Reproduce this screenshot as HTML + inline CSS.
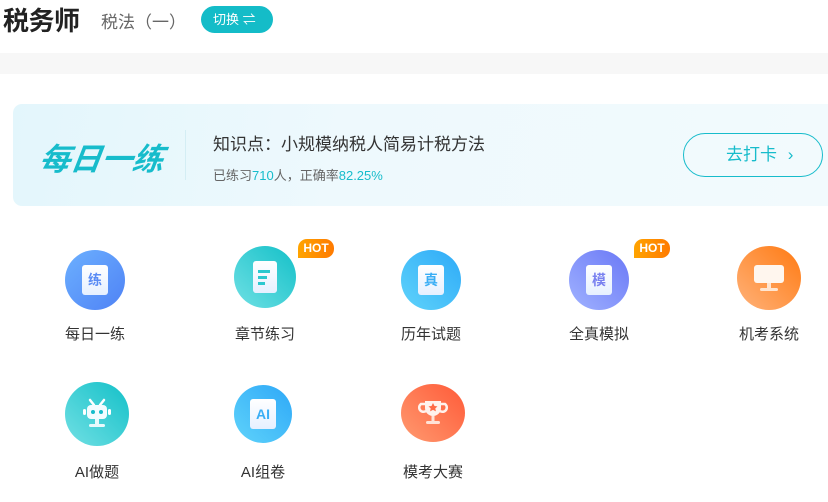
<!DOCTYPE html>
<html><head><meta charset="utf-8"><style>
*{margin:0;padding:0;box-sizing:border-box}
body{width:828px;height:502px;background:#fff;font-family:"Liberation Sans","Noto Sans CJK SC",sans-serif;position:relative;overflow:hidden;color:#333}
.abs{position:absolute}
.title{left:3px;top:1px;font-size:26px;font-weight:bold;color:#222;letter-spacing:-0.5px}
.sub{left:101px;top:8px;font-size:17px;color:#666}
.sw{left:201px;top:6px;width:72px;height:27px;border-radius:14px;background:#14bcc8;color:#fff;font-size:13px;line-height:27px;padding-left:12px}
.band{left:0;top:53px;width:828px;height:21px;background:#f7f7f7}
.card{left:13px;top:104px;width:830px;height:102px;border-radius:9px;background:linear-gradient(100deg,#e3f6fc 0%,#eef9fd 40%,#f2fafd 100%)}
.mr{left:40px;top:134px;font-size:31px;font-weight:bold;font-style:italic;color:#17bccb;transform:skewX(-8deg)}
.div{left:185px;top:130px;width:1px;height:50px;background:#d4eef4}
.kt{left:213px;top:130px;font-size:17px;color:#333}
.ks{left:213px;top:165px;font-size:13px;color:#666}
.ks b{font-weight:normal;color:#17bccb}
.go{left:683px;top:133px;width:140px;height:44px;border:1.5px solid #17bccb;border-radius:22px;color:#17bccb;font-size:17px;line-height:41px;padding-left:42px;word-spacing:6px}
.ic{width:60px;height:60px;border-radius:50%;display:flex;align-items:center;justify-content:center}
.lb{font-size:15px;color:#333;width:120px;text-align:center}
.hot{width:36px;height:19px;border-radius:9px 9px 9px 0;background:linear-gradient(90deg,#ffa400,#ff7a00);color:#fff;font-size:12px;font-weight:bold;text-align:center;line-height:19px}
.doc{width:26px;height:30px;background:linear-gradient(#fff,#e6f0ff);border-radius:3px;display:flex;align-items:center;justify-content:center;font-size:14px;font-weight:bold}
</style></head><body>
<div class="abs title">税务师</div>
<div class="abs sub">税法（一）</div>
<div class="abs sw">切换 ⇌</div>
<div class="abs band"></div>
<div class="abs card"></div>
<div class="abs mr">每日一练</div>
<div class="abs div"></div>
<div class="abs kt">知识点：小规模纳税人简易计税方法</div>
<div class="abs ks">已练习<b>710</b>人，正确率<b>82.25%</b></div>
<div class="abs go">去打卡 ›</div>

<div class="abs ic" style="left:65px;top:250px;background:linear-gradient(135deg,#6cb0ff,#4f82f5)"><div class="doc" style="color:#5a8cf5">练</div></div>
<div class="abs lb" style="left:35px;top:323px">每日一练</div>

<div class="abs ic" style="left:234px;top:246px;width:62px;height:62px;background:linear-gradient(45deg,#6fe0e4,#14c0c8)"><div class="doc" style="width:24px;height:32px;flex-direction:column;align-items:flex-start;padding-left:5px;gap:3px"><i style="display:block;width:12px;height:3px;background:#2cc8cf"></i><i style="display:block;width:9px;height:3px;background:#2cc8cf"></i><i style="display:block;width:7px;height:3px;background:#2cc8cf"></i></div></div>
<div class="abs hot" style="left:298px;top:239px">HOT</div>
<div class="abs lb" style="left:205px;top:323px">章节练习</div>

<div class="abs ic" style="left:401px;top:250px;background:linear-gradient(45deg,#5fd3fa,#2eaaf8)"><div class="doc" style="color:#3aaef5">真</div></div>
<div class="abs lb" style="left:371px;top:323px">历年试题</div>

<div class="abs ic" style="left:569px;top:250px;background:linear-gradient(45deg,#a0b2ff,#6a78f6)"><div class="doc" style="color:#7a82f0">模</div></div>
<div class="abs hot" style="left:634px;top:239px">HOT</div>
<div class="abs lb" style="left:539px;top:323px">全真模拟</div>

<div class="abs ic" style="left:737px;top:246px;width:64px;height:64px;background:linear-gradient(45deg,#ffb27a,#ff7a12)"><svg width="34" height="30" viewBox="0 0 34 30"><rect x="2" y="2" width="30" height="18" rx="3" fill="#fff6ee"/><rect x="15" y="20" width="4" height="5" fill="#ffe5d0"/><rect x="8" y="25" width="18" height="3" rx="1.5" fill="#ffe5d0"/></svg></div>
<div class="abs lb" style="left:709px;top:323px">机考系统</div>

<div class="abs ic" style="left:65px;top:382px;width:64px;height:64px;background:linear-gradient(45deg,#72e0e4,#13c0c8)"><svg width="34" height="34" viewBox="0 0 34 34"><path d="M10 3l4 5M24 3l-4 5" stroke="#fff" stroke-width="2.5" stroke-linecap="round"/><rect x="7" y="8" width="20" height="14" rx="4" fill="#f2fcff"/><rect x="3" y="12" width="3" height="6" rx="1.5" fill="#fff"/><rect x="28" y="12" width="3" height="6" rx="1.5" fill="#fff"/><circle cx="13" cy="15" r="2" fill="#17bccb"/><circle cx="21" cy="15" r="2" fill="#17bccb"/><rect x="15" y="22" width="4" height="5" fill="#e8fafc"/><rect x="9" y="27" width="16" height="3" rx="1.5" fill="#e8fafc"/></svg></div>
<div class="abs lb" style="left:37px;top:461px">AI做题</div>

<div class="abs ic" style="left:234px;top:385px;width:58px;height:58px;background:linear-gradient(45deg,#5fd3fa,#2ea8f8)"><div class="doc" style="color:#3aaef5">AI</div></div>
<div class="abs lb" style="left:203px;top:461px">AI组卷</div>

<div class="abs ic" style="left:401px;top:384px;width:64px;height:58px;background:linear-gradient(45deg,#ff9a70,#ff5a38)"><svg width="34" height="30" viewBox="0 0 34 30"><path d="M9 3h16v7a8 8 0 0 1-16 0z" fill="#fff2ec"/><path d="M9 6H5a4 4 0 0 0 5 7M25 6h4a4 4 0 0 1-5 7" stroke="#fff2ec" stroke-width="2.5" fill="none"/><path d="M17 5l1.5 3 3 .4-2.2 2 .6 3-2.9-1.5-2.9 1.5.6-3-2.2-2 3-.4z" fill="#ff6a45"/><rect x="15.5" y="18" width="3" height="5" fill="#ffe2d6"/><rect x="10" y="23" width="14" height="3" rx="1.5" fill="#ffe2d6"/></svg></div>
<div class="abs lb" style="left:373px;top:461px">模考大赛</div>
</body></html>
